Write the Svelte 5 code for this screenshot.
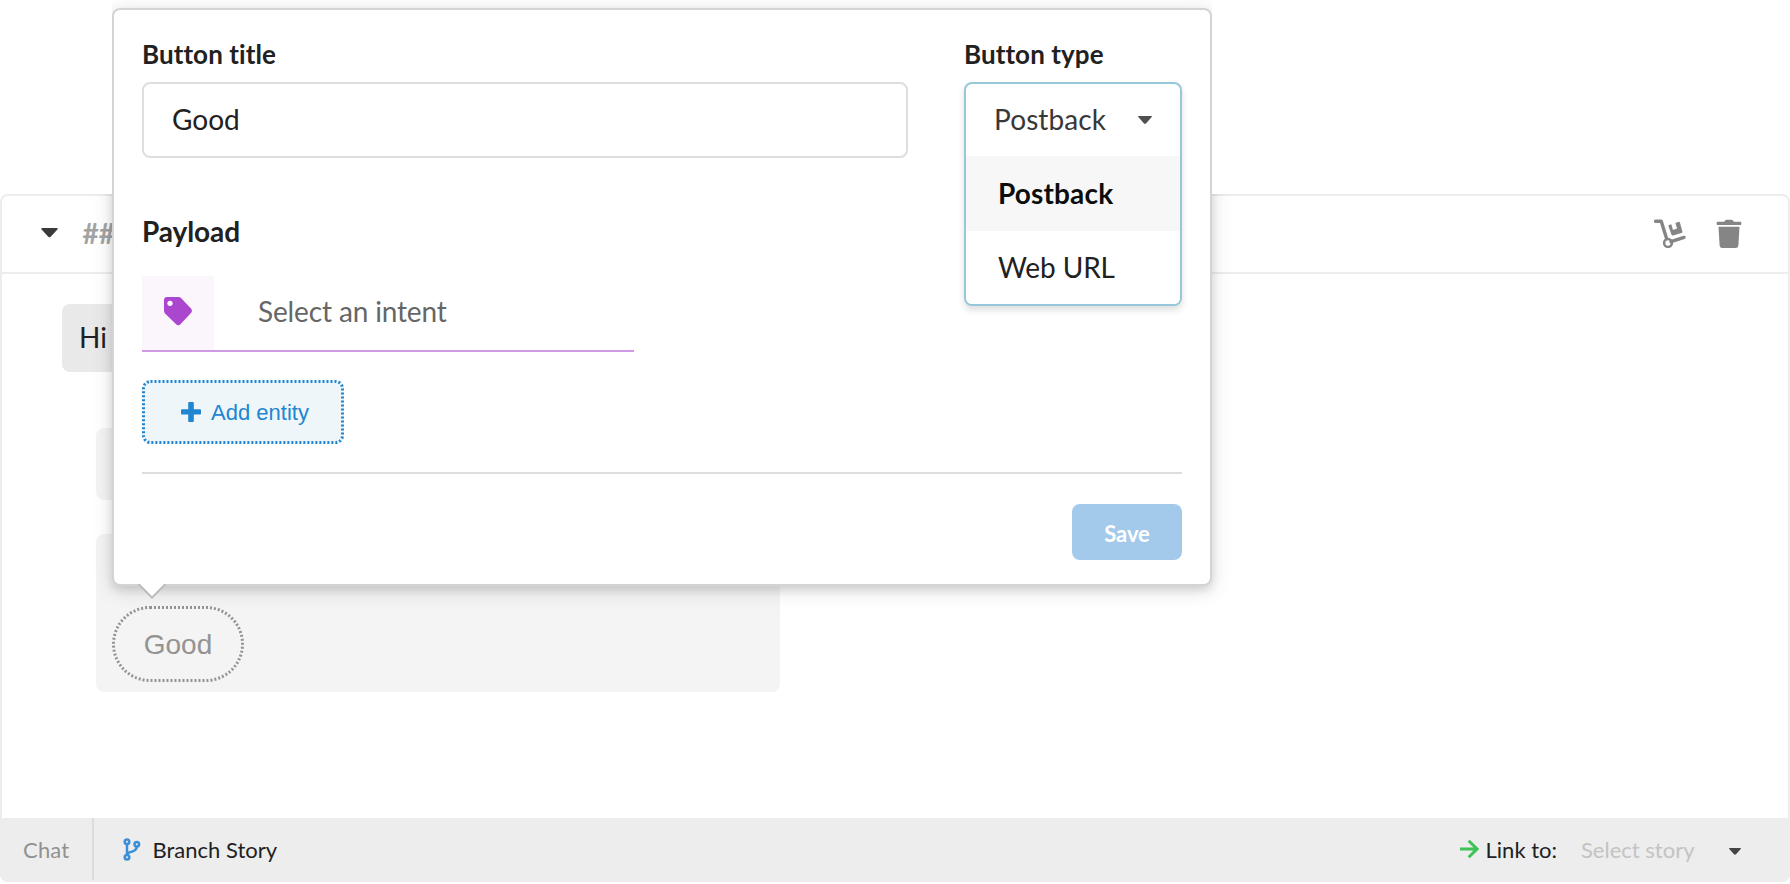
<script lang="ts">
  const options = ['Postback', 'Web URL'];
  let selected = $state('Postback');
  let title = $state('Good');
</script>

<main>
  <section class="story">
    <header>
      <svg class="caret" width="17" height="10" viewBox="0 0 17 10"><path d="M1.2 0h14.6q1.4.3.6 1.5L9.7 8.8q-1.2 1.1-2.4 0L.6 1.500q-.8-1.200.6-1.500z" fill="#3a3a3a" /></svg>
      <span class="hashes">##</span>
      <span class="spacer"></span>
      <svg class="dolly" width="32" height="29" viewBox="0 0 32 29">
        <g fill="none" stroke="#858585" stroke-linecap="round" stroke-linejoin="round">
          <path d="M1.600 2.200H7.200L12.600 19.500M17 22.700L30 18.400" stroke-width="3.400" />
          <circle cx="14" cy="24" r="3.900" stroke-width="2.500" />
        </g>
        <path d="M14.900 5.900L17.300 5.200L19 10.900L23.100 9.600L21.400 3.900L24.700 2.700Q25.600 2.600 25.900 3.500L28.400 12.400Q28.500 13.500 27.600 13.900L18.900 16.500Q17.900 16.700 17.500 15.700L14.400 7Q14.200 6.200 14.900 5.900z" fill="#858585" />
      </svg>
      <svg class="trash" width="26" height="30" viewBox="0 0 26 30"><path d="M1.300 2.800H8L9.400 1.200Q9.900.700 10.600.700H15.400Q16.100.700 16.600 1.200L18 2.800H24.700Q25.300 2.900 25.300 3.700V5Q25.300 5.900 24.600 5.900H1.400Q.700 5.900.700 5V3.700Q.700 2.900 1.300 2.800zM2.500 7.800H23.500L22.400 26.500Q22 29 19.700 29H6.300Q4 29 3.600 26.500z" fill="#858585" /></svg>
    </header>
    <div class="messages">
      <div class="user">Hi</div>
      <div class="bot first"></div>
      <div class="bot second">
        <button class="pill">
          <svg width="132" height="76"><rect x="1.500" y="1.500" width="129" height="73" rx="36.500" /></svg>
          Good
        </button>
      </div>
    </div>
    <footer>
      <div class="chat">Chat</div>
      <svg class="branch" width="18" height="23" viewBox="0 0 18 23" fill="none" stroke="#3b8fd9" stroke-width="2.500">
        <circle cx="4" cy="3.800" r="2.300" /><circle cx="4" cy="19.200" r="2.300" /><circle cx="13.800" cy="6.300" r="2.300" />
        <path d="M4 6V17M13.800 8.600C13.800 15.500 5 12.500 4 16.500" />
      </svg>
      <span class="branch-label">Branch Story</span>
      <span class="spacer"></span>
      <svg class="arrow" width="19" height="20" viewBox="0 0 19 20"><path d="M0 10H16M8.700 1.800L17 10L8.700 18.200" fill="none" stroke="#3fc257" stroke-width="3" /></svg>
      <span class="link">Link to:</span>
      <span class="placeholder">Select story</span>
      <svg class="small-caret" width="12" height="7" viewBox="0 0 12 7"><path d="M.6 0H11.400q.9.300.3 1L7 6.300q-1 .9-2 0L.3 1q-.6-.700.3-1z" fill="#444" /></svg>
    </footer>
  </section>

  <div class="popup">
    <div class="panel">
      <div class="fields">
        <label class="title-field"><b>Button title</b><input bind:value={title} /></label>
        <div class="type-field">
          <b>Button type</b>
          <div class="dropdown">
            <div class="current"><span>{selected}</span>
              <svg width="14" height="8" viewBox="0 0 14 8"><path d="M.6 0H13.400q.9.300.3 1.100L8.200 7.200q-1.200 1-2.400 0L.3 1.100q-.6-.8.3-1.100z" fill="#505050" /></svg>
            </div>
            {#each options as option}
              <button class="option" class:active={option === selected} onclick={() => (selected = option)}><span>{option}</span></button>
            {/each}
          </div>
        </div>
      </div>
      <b class="payload">Payload</b>
      <div class="intent">
        <div class="tag"><svg width="28" height="29" viewBox="0 0 28 29"><path fill-rule="evenodd" d="M2.500 0H14.500Q16 .1 17 1L27.200 11.800Q28.600 13.800 27.200 15.700L16.200 27.600Q14.300 29.200 12.400 27.600L1 16.500Q0 15.300 0 13.800V2.500Q.2.200 2.500 0zM6 3.700a2.700 2.700 0 1 0 .01 0z" fill="#ab47cf" /></svg></div>
        <span>Select an intent</span>
      </div>
      <button class="entity">
        <svg class="outline" width="202" height="64"><rect x="1.500" y="1.500" width="199" height="61" rx="7" /></svg>
        <svg class="plus" width="20" height="20" viewBox="0 0 20 20"><path d="M7.200 1Q7.200 0 8.200 0H11.800Q12.800 0 12.800 1V7.200H19Q20 7.200 20 8.200V11.400Q20 12.400 19 12.400H12.800V19Q12.800 20 11.800 20H8.200Q7.200 20 7.200 19V12.400H1Q0 12.400 0 11.400V8.200Q0 7.200 1 7.200H7.200z" fill="#2185d0" /></svg>
        Add entity
      </button>
      <hr />
      <button class="save">Save</button>
    </div>
    <svg class="tip" width="28" height="16" viewBox="0 0 28 16"><path d="M.6 0H27.400L14 13.400z" fill="#fff" /><path d="M.6 0L14 13.600L27.400 0" fill="none" stroke="#bababc" stroke-width="2" /></svg>
  </div>
</main>

<style>
  :global(body) { background: #fff; }
  * { box-sizing: border-box; }
  main { position: relative; width: 1790px; height: 884px; padding-top: 194px; overflow: hidden; font-family: Lato, sans-serif; font-variant-ligatures: none; color: #212121; }
  button { font: inherit; color: inherit; border: 0; padding: 0; margin: 0; }
  b { display: block; font-size: 26px; line-height: 30px; font-weight: 700; letter-spacing: .08px; }
  .story { height: 688px; border: 2px solid #ededed; border-radius: 8px; display: flex; flex-direction: column; }
  header { height: 78px; border-bottom: 2px solid #ededed; display: flex; align-items: center; padding: 0 46px 1px 39px; flex: none; }
  .caret { margin-top: -2px; }
  .hashes { font-size: 28px; font-weight: 700; color: #a3a3a3; margin-left: 24.5px; padding-bottom: 2px; }
  .spacer { flex: 1; }
  .dolly { margin-right: 30px; }
  .messages { flex: 1; padding: 30px 60px; }
  .user { width: 100px; height: 68px; border-radius: 8px; background: #e9e9e9; padding-left: 17px; font-size: 28px; line-height: 67px; }
  .bot { background: #f4f4f4; border-radius: 8px; width: 684px; margin-left: 34px; }
  .first { height: 72px; margin-top: 56px; }
  .second { height: 158px; margin-top: 34px; padding: 72px 16px 0; }
  .pill { position: relative; width: 132px; height: 76px; background: transparent; color: #939393; font: 28px "Liberation Sans", sans-serif; display: block; padding-top: 2px; }
  .pill svg, .outline { position: absolute; inset: 0; fill: none; stroke: #939393; stroke-width: 3; stroke-dasharray: 2 2; }
  footer { height: 64px; margin: 0 -2px -2px; background: #ededed; border-bottom: 2px solid #ededed; border-radius: 0 0 8px 8px; display: flex; align-items: center; font-size: 22px; padding-right: 49.5px; flex: none; }
  .chat { width: 94px; height: 62px; line-height: 63px; padding-left: 23px; border-right: 2px solid #dcdcdc; color: #919191; letter-spacing: .2px; }
  .branch { margin-left: 29px; }
  .branch-label { margin-left: 11.5px; }
  .arrow { margin-right: -1px; }
  .link { margin-left: 8px; }
  .placeholder { color: #c3c3c3; margin-left: 24px; }
  .small-caret { margin: 4px 0 0 34px; }
  .popup { position: absolute; left: 112px; top: 8px; width: 1100px; height: 578px; clip-path: polygon(0 -8px, 1100px -8px, 1100px 186px, 1140px 186px, 1140px 620px, -40px 620px, -40px 186px, 0 186px); }
  .panel { height: 578px; border: 2px solid #d4d4d5; border-radius: 8px; background: #fff; box-shadow: 0 4px 8px rgba(34,36,38,.12), 0 4px 20px rgba(34,36,38,.15); padding: 29px 28px 24px; display: flex; flex-direction: column; }
  .fields { display: flex; gap: 56px; height: 43px; }
  .title-field { width: 766px; }
  input { display: block; width: 100%; height: 76px; margin-top: 13px; border: 2px solid #dededf; border-radius: 8px; padding: 0 28px 2px; font: 28px Lato, sans-serif; color: #212121; outline: 0; }
  .type-field { width: 218px; }
  .dropdown { height: 224px; margin-top: 13px; border: 2px solid #96c8da; border-radius: 8px; background: #fff; box-shadow: 0 4px 6px rgba(34,36,38,.15); overflow: hidden; }
  .current { height: 72px; padding: 0 28px; display: flex; justify-content: space-between; align-items: center; font-size: 28px; color: #383838; }
  .current span { padding-bottom: 2px; letter-spacing: .1px; }
  .option { display: block; width: 100%; height: 73px; text-align: left; padding: 0 0 2px 32px; font-size: 28px; letter-spacing: -.1px; background: #fff; }
  .active { height: 75px; padding-bottom: 1px; background: #f7f7f7; color: #0d0d0d; font-weight: 700; letter-spacing: .15px; }
  .payload { margin-top: 134px; font-size: 28px; letter-spacing: -.08px; }
  .intent { width: 492px; height: 76px; margin-top: 30px; border-bottom: 2px solid #cf9ae4; display: flex; align-items: center; font-size: 28px; letter-spacing: -.14px; color: #666; flex: none; }
  .intent span { padding-bottom: 4px; }
  .tag { width: 72px; height: 74px; background: #faf6fc; display: grid; place-items: center; margin-right: 44px; padding-bottom: 4px; }
  .entity { position: relative; width: 202px; height: 64px; margin-top: 28px; padding: 1px 0 0 4px; border-radius: 8px; background: #eff6fa; color: #2185d0; font: 22px "Liberation Sans", sans-serif; display: flex; align-items: center; justify-content: center; gap: 10px; flex: none; }
  .plus { margin-top: -2px; }
  .outline { stroke: #2185d0; }
  hr { width: 100%; height: 2px; border: 0; background: #dededf; margin: 28px 0 30px; flex: none; }
  .save { width: 110px; height: 56px; padding-top: 2px; border-radius: 8px; background: #a3c9eb; color: #fff; font-size: 22px; font-weight: 700; letter-spacing: -.1px; align-self: flex-end; flex: none; }
  .tip { position: absolute; left: 26px; top: 576px; }
</style>
